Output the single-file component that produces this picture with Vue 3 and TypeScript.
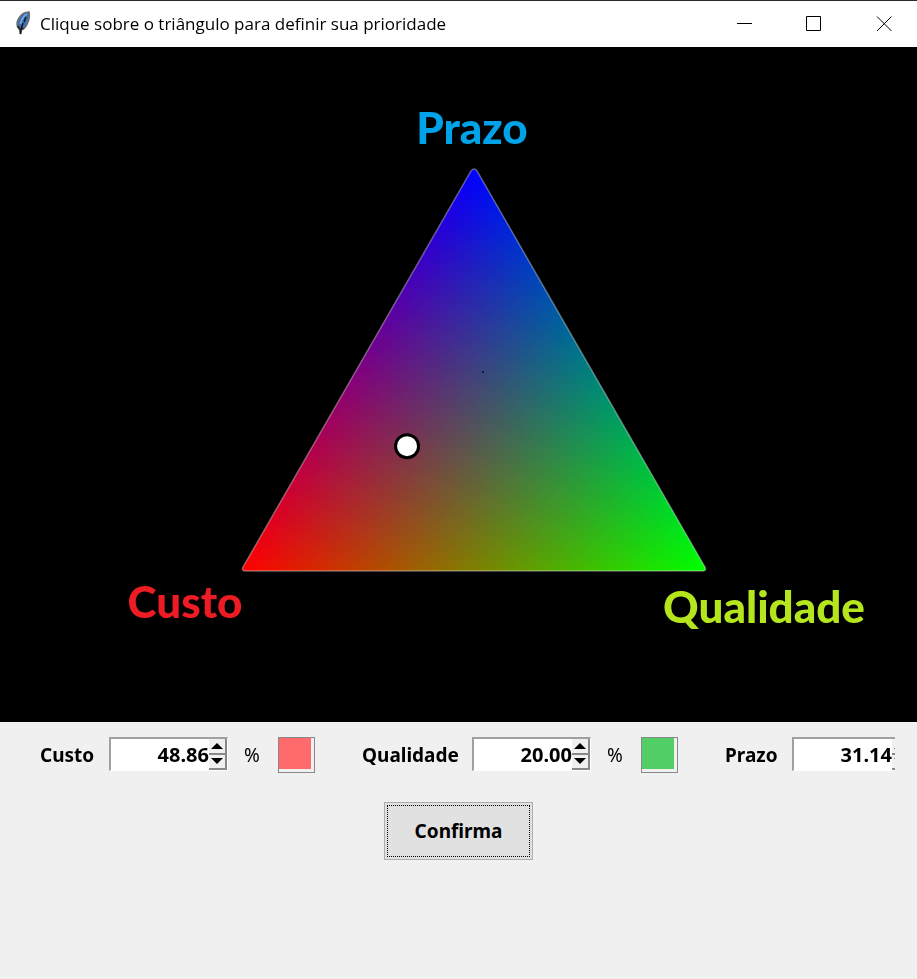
<script setup lang="ts">
import { computed, reactive } from 'vue'

interface Channel {
  id: string
  label: string
  value: number
  swatch?: string
}

interface Point {
  x: number
  y: number
}

const channels = reactive<Channel[]>([
  { id: 'custo', label: 'Custo', value: 48.86, swatch: '#ff6b6b' },
  { id: 'qualidade', label: 'Qualidade', value: 20, swatch: '#51cf66' },
  { id: 'prazo', label: 'Prazo', value: 31.14 },
])

const corners: Point[] = [
  { x: 242, y: 524 },
  { x: 706, y: 524 },
  { x: 474, y: 120 },
]

const marker = computed<Point>(() => {
  const total = channels.reduce((sum, c) => sum + c.value, 0) || 1
  return {
    x: channels.reduce((sum, c, i) => sum + c.value * corners[i].x, 0) / total,
    y: channels.reduce((sum, c, i) => sum + c.value * corners[i].y, 0) / total + 1,
  }
})

function pick(event: MouseEvent) {
  const box = (event.currentTarget as SVGElement).getBoundingClientRect()
  const x = ((event.clientX - box.left) / box.width) * 917
  const y = ((event.clientY - box.top) / box.height) * 675 - 1
  const prazo = (524 - y) / 404
  const qualidade = (x - 242 - prazo * 232) / 464
  const custo = 1 - prazo - qualidade
  if (Math.min(prazo, qualidade, custo) < 0) return
  channels[0].value = custo * 100
  channels[1].value = qualidade * 100
  channels[2].value = prazo * 100
}

function step(channel: Channel, amount: number) {
  channel.value = Math.min(100, Math.max(0, channel.value + amount))
}

function edit(channel: Channel, event: Event) {
  const next = parseFloat((event.target as HTMLInputElement).value)
  if (!Number.isNaN(next)) channel.value = Math.min(100, Math.max(0, next))
}
</script>

<template>
  <main class="window">
    <header class="titlebar">
      <svg class="feather" viewBox="0 0 16 26" aria-hidden="true">
        <path d="M5.5 23 L4.500 18.500 C1.500 15.500 1.500 11 4 7 C6.500 3 10 1 14 1 C14.800 5 14 10 12 13.500 C10.500 16.500 8.500 18.500 6.300 19 Z" fill="#3f73b4" stroke="#6b6b6b" stroke-width="1.500" />
        <path d="M12 3 C8.500 5 6.500 8.500 5.500 13" fill="none" stroke="#6fa3de" stroke-width="2" />
        <path d="M11 6 L9 11 M8 12 L6 18 L5.500 23" fill="none" stroke="#111" stroke-width="1.500" />
        <path d="M2.500 15 L5.500 19 L8.500 17" fill="none" stroke="#222" stroke-width="1.500" />
      </svg>
      <h1 class="title">Clique sobre o triângulo para definir sua prioridade</h1>
      <div class="window-controls">
        <button type="button" aria-label="Minimizar">
          <svg viewBox="0 0 16 16"><path d="M1 7.5H16" /></svg>
        </button>
        <button type="button" aria-label="Maximizar">
          <svg viewBox="0 0 16 16"><path d="M0.5 0.5H14.5V14.5H0.5Z" /></svg>
        </button>
        <button type="button" aria-label="Fechar">
          <svg viewBox="0 0 16 16"><path d="M1 0.5L15.500 15M15.500 0.5L1 15" /></svg>
        </button>
      </div>
    </header>

    <svg class="board" viewBox="0 0 917 675" @click="pick">
      <defs>
        <linearGradient id="red" gradientUnits="userSpaceOnUse" x1="242" y1="524" x2="590" y2="322">
          <stop offset="0" stop-color="#f00" />
          <stop offset="1" stop-color="#000" />
        </linearGradient>
        <linearGradient id="green" gradientUnits="userSpaceOnUse" x1="706" y1="524" x2="358" y2="322">
          <stop offset="0" stop-color="#0f0" />
          <stop offset="1" stop-color="#000" />
        </linearGradient>
        <linearGradient id="blue" gradientUnits="userSpaceOnUse" x1="474" y1="120" x2="474" y2="524">
          <stop offset="0" stop-color="#00f" />
          <stop offset="1" stop-color="#000" />
        </linearGradient>
        <path id="shape" d="M471 124 Q474 120 477 124 L705 520 Q707 524 702 524 H246 Q241 524 243 520 Z" />
      </defs>
      <g class="mix">
        <use href="#shape" fill="url(#red)" />
        <use href="#shape" fill="url(#green)" />
        <use href="#shape" fill="url(#blue)" />
      </g>
      <use href="#shape" class="outline" />
      <rect x="482" y="324" width="2" height="2" fill="#102040" />
      <circle class="marker" :cx="marker.x" :cy="marker.y" r="11.5" />
      <text class="corner prazo" x="472" y="97">Prazo</text>
      <text class="corner custo" x="185" y="571">Custo</text>
      <text class="corner qualidade" x="764" y="576">Qualidade</text>
    </svg>

    <form class="panel" @submit.prevent>
      <div class="values">
        <div v-for="channel in channels" :key="channel.id" class="channel">
          <label :for="channel.id" :class="['name', channel.id]">{{ channel.label }}</label>
          <div class="spinbox">
            <input
              :id="channel.id"
              type="text"
              inputmode="decimal"
              :value="channel.value.toFixed(2)"
              @change="edit(channel, $event)"
            />
            <div class="arrows">
              <button type="button" :aria-label="`Aumentar ${channel.label}`" @click="step(channel, 1)">
                <svg viewBox="0 0 12 6"><path d="M6 0L12 6H0Z" /></svg>
              </button>
              <button type="button" :aria-label="`Diminuir ${channel.label}`" @click="step(channel, -1)">
                <svg viewBox="0 0 12 6"><path d="M0 0H12L6 6Z" /></svg>
              </button>
            </div>
          </div>
          <template v-if="channel.swatch">
            <span class="unit">%</span>
            <span class="swatch"><span :style="{ background: channel.swatch }"></span></span>
          </template>
        </div>
      </div>
      <button type="submit" class="confirm"><span>Confirma</span></button>
    </form>
  </main>
</template>

<style>
body {
  margin: 0;
  background: #f0f0f0;
}
</style>

<style scoped>
.window {
  display: flex;
  flex-direction: column;
  min-height: 100vh;
  overflow: hidden;
  background: #f0f0f0;
  color: #000;
  font-family: "Noto Sans", "Open Sans", sans-serif;
}

.titlebar {
  display: flex;
  align-items: center;
  box-sizing: border-box;
  height: 47px;
  padding-left: 15px;
  border-top: 1px solid #2d292d;
  background: #fff;
}

.feather {
  width: 16px;
  height: 26px;
  margin-right: 9px;
}

.title {
  flex: 1;
  margin: 0;
  font-family: "Open Sans", sans-serif;
  font-size: 17px;
  font-weight: 400;
  line-height: 24px;
  white-space: nowrap;
}

.window-controls {
  display: flex;
  margin-right: -2px;
}

.window-controls button {
  display: grid;
  place-items: center;
  width: 70px;
  height: 46px;
  padding: 0;
  border: 0;
  background: none;
}

.window-controls svg {
  width: 16px;
  height: 16px;
  fill: none;
  stroke: #000;
  stroke-width: 1;
}

.board {
  display: block;
  width: 100%;
  background: #000;
  cursor: crosshair;
}

.mix {
  isolation: isolate;
}

.mix use {
  mix-blend-mode: screen;
}

.outline {
  fill: none;
  stroke: #fff;
  stroke-opacity: 0.35;
  stroke-width: 1.5;
}

.marker {
  fill: #fff;
  stroke: #000;
  stroke-width: 3;
}

.corner {
  font-family: Lato, sans-serif;
  font-size: 44px;
  font-weight: 900;
  text-anchor: middle;
}

.corner.prazo {
  fill: #00a2e8;
}

.corner.custo {
  fill: #ed1c24;
}

.corner.qualidade {
  fill: #b5e61d;
}

.panel {
  display: flex;
  flex-direction: column;
  align-items: center;
  gap: 29px;
  padding: 15px 22px;
}

.values {
  display: flex;
  align-self: stretch;
  gap: 47px;
  padding-left: 18px;
  overflow: hidden;
}

.channel {
  display: flex;
  flex: none;
  font-size: 19px;
  line-height: 36px;
}

.name {
  width: 69px;
  font-weight: 700;
}

.name.qualidade {
  width: 110px;
}

.name.prazo {
  width: 67px;
}

.spinbox {
  display: flex;
  box-sizing: border-box;
  width: 119px;
  height: 34px;
  border: 1px solid #fff;
  border-top: 2px solid #a0a0a0;
  border-left: 2px solid #a0a0a0;
  background: #fff;
}

.spinbox input {
  flex: 1;
  min-width: 0;
  padding: 0;
  border: 0;
  outline: 0;
  background: none;
  color: #000;
  font: inherit;
  font-size: 20px;
  font-weight: 700;
  text-align: right;
}

.arrows {
  display: flex;
  flex-direction: column;
  width: 18px;
}

.arrows button {
  display: grid;
  flex: 1;
  place-items: center;
  padding: 0;
  border: 0;
  border-right: 2px solid #888;
  border-bottom: 2px solid #888;
  background: #f0f0f0;
}

.arrows svg {
  width: 12px;
  height: 6px;
}

.unit {
  width: 50px;
  box-sizing: border-box;
  padding-left: 16px;
}

.swatch {
  box-sizing: border-box;
  width: 37px;
  height: 36px;
  padding: 0 3px 3px 0;
  border: 1px solid #888;
  background: #f0f0f0;
}

.swatch span {
  display: block;
  height: 100%;
}

.confirm {
  width: 149px;
  height: 58px;
  padding: 2px;
  border: 1px solid #adadad;
  background: #e1e1e1;
  color: #000;
  font: inherit;
  font-size: 19px;
  font-weight: 700;
}

.confirm span {
  display: grid;
  box-sizing: border-box;
  height: 100%;
  place-items: center;
  border: 1px dotted #000;
}
</style>
